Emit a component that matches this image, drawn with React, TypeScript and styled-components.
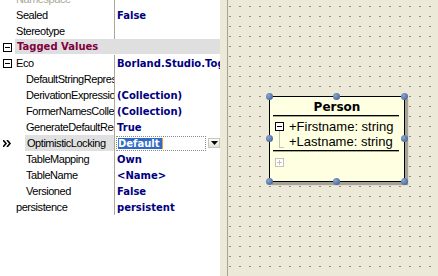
import React from "react";
import styled, { createGlobalStyle } from "styled-components";

const GlobalStyle = createGlobalStyle`
  html, body {
    margin: 0;
    padding: 0;
    background: #ece9d8;
    overflow: hidden;
  }
`;

const Window = styled.div`
  display: flex;
  width: 438px;
  height: 276px;
`;

const PropertyPane = styled.div`
  width: 220px;
  height: 100%;
  flex-shrink: 0;
  background: #fff;
  overflow: hidden;
`;

const Splitter = styled.div`
  width: 7px;
  flex-shrink: 0;
  background: #ece9d8;
  border-right: 1px solid #a7a394;
`;

const Canvas = styled.div`
  position: relative;
  flex: 1;
  height: 100%;
  background-color: #ece9d8;
  background-image: linear-gradient(to bottom, transparent 1px, #ece9d8 1px),
    linear-gradient(to right, #8e8c82 2px, transparent 2px);
  background-size: 10px 10px;
  background-position: 1px 6px;
`;

const RowList = styled.div`
  margin-top: -9px;
`;

const Row = styled.div`
  display: flex;
  height: 16px;
  font-family: "Liberation Sans", Arial, sans-serif;
  font-size: 11px;
  letter-spacing: -0.45px;
`;

const Gutter = styled.div`
  width: 15px;
  flex-shrink: 0;
  display: flex;
  align-items: center;
  padding-left: 3px;
  box-sizing: border-box;
`;

const ExpandBox = styled.span<{ $open: boolean; $faded?: boolean }>`
  position: relative;
  width: 9px;
  height: 9px;
  box-sizing: border-box;
  border: 1px solid ${(p) => (p.$faded ? "#c4c2b8" : "#000")};
  background: #fff;
  &::before {
    content: "";
    position: absolute;
    left: 1px;
    top: 3px;
    width: 5px;
    height: 1px;
    background: ${(p) => (p.$faded ? "#c4c2b8" : "#000")};
  }
  &::after {
    content: "";
    display: ${(p) => (p.$open ? "none" : "block")};
    position: absolute;
    left: 3px;
    top: 1px;
    width: 1px;
    height: 5px;
    background: ${(p) => (p.$faded ? "#c4c2b8" : "#000")};
  }
`;

const NameCell = styled.div`
  width: 114px;
  flex-shrink: 0;
  display: flex;
  overflow: hidden;
`;

const NameLabel = styled.div<{ $level: number; $selected?: boolean; $disabled?: boolean }>`
  flex: 1;
  min-width: 0;
  margin-left: ${(p) => (p.$level ? 10 : 0)}px;
  padding-left: ${(p) => (p.$selected ? 2 : 1)}px;
  line-height: 16px;
  white-space: nowrap;
  overflow: hidden;
  color: ${(p) => (p.$disabled ? "#aca899" : "#000")};
  background: ${(p) => (p.$selected ? "#e0e0e0" : "transparent")};
`;

const ValueCell = styled.div`
  flex: 1;
  display: flex;
  align-items: center;
  min-width: 0;
  border-left: 1px solid #aca899;
  padding-left: 2px;
  font-family: "DejaVu Sans", Verdana, sans-serif;
  font-size: 10px;
  font-weight: bold;
  letter-spacing: 0;
  color: #000080;
  white-space: nowrap;
  overflow: hidden;
`;

const CategoryLabel = styled.div`
  flex: 1;
  margin: 0 0 1px 0;
  padding-left: 2px;
  background: #dfdfdf;
  line-height: 15px;
  font-family: "DejaVu Sans", Verdana, sans-serif;
  font-size: 10px;
  font-weight: bold;
  letter-spacing: 0;
  color: #800040;
`;

const EditField = styled.div`
  flex: 1;
  height: 15px;
  display: flex;
  align-items: center;
  margin-left: -1px;
  padding-left: 1px;
  border: 1px dotted #8a8a8a;
  box-sizing: border-box;
`;

const Selection = styled.span`
  background: #316ac5;
  color: #fff;
  line-height: 11px;
  padding-right: 2px;
  border-right: 1px solid #e0a040;
`;

const DropButton = styled.div`
  width: 12px;
  height: 10px;
  margin: 0 0 0 2px;
  flex-shrink: 0;
  display: flex;
  align-items: center;
  justify-content: center;
  background: linear-gradient(#fafaf8, #e4e2da);
  border: 1px solid #c9c7ba;
  box-sizing: border-box;
`;

const ClassBox = styled.div`
  position: absolute;
  left: 41px;
  top: 96px;
  width: 136px;
  height: 86px;
  box-sizing: border-box;
  border: 1px solid #000;
  background: #ffffe1;
  box-shadow: 3px 3px 1px rgba(0, 0, 0, 0.3);
`;

const ClassTitle = styled.div`
  height: 18px;
  text-align: center;
  line-height: 20px;
  font-family: "DejaVu Sans", Verdana, sans-serif;
  font-size: 12px;
  font-weight: bold;
  color: #000;
`;

const Divider = styled.div`
  height: 1px;
  margin: 0 5px 0 3px;
  background: #000;
  box-shadow: 0 1px 0 rgba(0, 0, 0, 0.35);
`;

const AttributeList = styled.div`
  position: relative;
  padding: 3px 0 1px 5px;
`;

const AttributeRow = styled.div`
  display: flex;
  align-items: center;
  height: 15px;
  font-family: "Liberation Sans", Arial, sans-serif;
  font-size: 13px;
  color: #000;
`;

const AttributeGutter = styled.div`
  width: 14px;
  flex-shrink: 0;
  display: flex;
  align-items: center;
`;

const TreeLine = styled.div`
  position: absolute;
  left: 9px;
  top: 15px;
  width: 4px;
  height: 16px;
  border-left: 1px solid #c4c2b8;
  border-bottom: 1px solid #c4c2b8;
`;

const OperationList = styled.div`
  padding: 7px 0 0 5px;
  display: flex;
`;

const Handle = styled.span<{ $x: number; $y: number }>`
  position: absolute;
  left: ${(p) => p.$x - 4}px;
  top: ${(p) => p.$y - 4}px;
  width: 7px;
  height: 7px;
  border-radius: 50%;
  background: radial-gradient(circle at 35% 35%, #8aa4cc, #4d6ea3 70%);
`;

type Prop = {
  name: string;
  value?: string;
  level: number;
  expander?: boolean;
  selected?: boolean;
  disabled?: boolean;
};

const before: Prop[] = [
  { name: "Namespace", level: 0, disabled: true },
  { name: "Sealed", value: "False", level: 0 },
  { name: "Stereotype", level: 0 },
];

const after: Prop[] = [
  { name: "Eco", value: "Borland.Studio.Together", level: 0, expander: true },
  { name: "DefaultStringRepresentation", level: 1 },
  { name: "DerivationExpressions", value: "(Collection)", level: 1 },
  { name: "FormerNamesCollection", value: "(Collection)", level: 1 },
  { name: "GenerateDefaultRegion", value: "True", level: 1 },
  { name: "OptimisticLocking", value: "Default", level: 1, selected: true },
  { name: "TableMapping", value: "Own", level: 1 },
  { name: "TableName", value: "<Name>", level: 1 },
  { name: "Versioned", value: "False", level: 1 },
  { name: "persistence", value: "persistent", level: 0 },
];

const Chevron = () => (
  <svg width="10" height="7" viewBox="0 0 10 7">
    <path d="M0 0 L3 3.5 L0 7 M4 0 L7 3.5 L4 7" fill="none" stroke="#000" strokeWidth="1.6" />
  </svg>
);

const PropertyRow: React.FC<{ prop: Prop }> = ({ prop }) => (
  <Row>
    <NameCell>
      <Gutter>
        {prop.expander && <ExpandBox $open />}
        {prop.selected && <Chevron />}
      </Gutter>
      <NameLabel $level={prop.level} $selected={prop.selected} $disabled={prop.disabled}>
        {prop.name}
      </NameLabel>
    </NameCell>
    <ValueCell>
      {prop.selected ? (
        <>
          <EditField>
            <Selection>{prop.value}</Selection>
          </EditField>
          <DropButton>
            <svg width="7" height="4" viewBox="0 0 7 4">
              <path d="M0 0 H7 L3.5 4 Z" fill="#000" />
            </svg>
          </DropButton>
        </>
      ) : (
        prop.value
      )}
    </ValueCell>
  </Row>
);

const handles: [number, number][] = [
  [0, 0], [67, 0], [135, 0],
  [0, 42], [135, 42],
  [0, 85], [67, 85], [135, 85],
];

export default function App() {
  return (
    <>
      <GlobalStyle />
      <Window>
        <PropertyPane>
          <RowList>
            {before.map((p) => (
              <PropertyRow key={p.name} prop={p} />
            ))}
            <Row>
              <Gutter>
                <ExpandBox $open />
              </Gutter>
              <CategoryLabel>Tagged Values</CategoryLabel>
            </Row>
            {after.map((p) => (
              <PropertyRow key={p.name} prop={p} />
            ))}
          </RowList>
        </PropertyPane>
        <Splitter />
        <Canvas>
          <ClassBox>
            <ClassTitle>Person</ClassTitle>
            <Divider />
            <AttributeList>
              <TreeLine />
              <AttributeRow>
                <AttributeGutter>
                  <ExpandBox $open />
                </AttributeGutter>
                +Firstname: string
              </AttributeRow>
              <AttributeRow>
                <AttributeGutter />
                +Lastname: string
              </AttributeRow>
            </AttributeList>
            <Divider />
            <OperationList>
              <ExpandBox $open={false} $faded />
            </OperationList>
            {handles.map(([x, y]) => (
              <Handle key={`${x}-${y}`} $x={x} $y={y} />
            ))}
          </ClassBox>
        </Canvas>
      </Window>
    </>
  );
}
